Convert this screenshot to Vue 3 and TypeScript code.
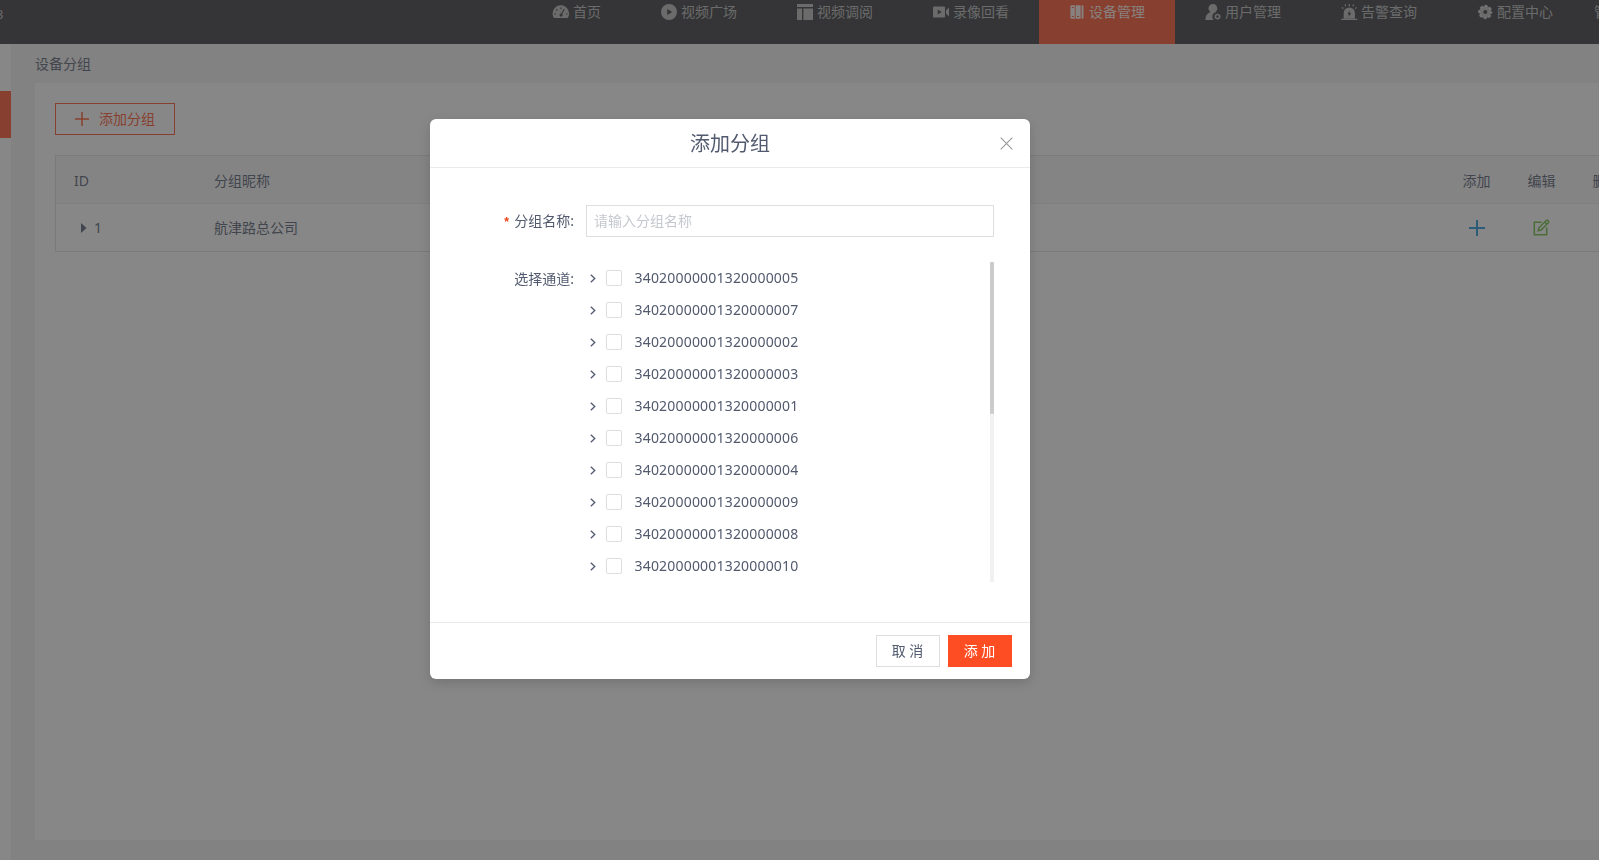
<script setup lang="ts">
import { ref } from 'vue'

interface NavItem {
  label: string
  icon: string
  active?: boolean
}

const navItems: NavItem[] = [
  { label: '首页', icon: 'dashboard' },
  { label: '视频广场', icon: 'play' },
  { label: '视频调阅', icon: 'layout' },
  { label: '录像回看', icon: 'camera' },
  { label: '设备管理', icon: 'device', active: true },
  { label: '用户管理', icon: 'user' },
  { label: '告警查询', icon: 'alarm' },
  { label: '配置中心', icon: 'gear' },
]

const channels: string[] = ['05', '07', '02', '03', '01', '06', '04', '09', '08', '10'].map(
  (n) => '340200000013200000' + n,
)

const groupName = ref('')
const checked = ref<string[]>([])
</script>

<template>
  <div class="page">
    <header class="header">
      <span class="brand">3</span>
      <nav class="nav">
        <a v-for="item in navItems" :key="item.label" class="nav-item" :class="{ active: item.active }">
          <svg class="nav-icon" viewBox="0 0 16 16" width="16" height="16" fill="currentColor">
            <path
              v-if="item.icon === 'dashboard'"
              fill-rule="evenodd"
              d="M1 14A8 8 0 0 1-.5 9.600a8.300 8.300 0 0 1 16.600 0c0 1.700-.5 3.200-1.500 4.400zM7.300 3.600v1.500h1.200V3.600zM3.600 5.100l-.8.8 1.100 1 .8-.8zM1.500 9.400v1.200H3V9.400zm11.500 0v1.200h1.500V9.400zM10.800 4.800L8.200 9.600a1.500 1.500 0 1 0 1 .5L11.700 5.200z"
            />
            <path
              v-else-if="item.icon === 'play'"
              fill-rule="evenodd"
              d="M8 0a8 8 0 1 1 0 16A8 8 0 0 1 8 0zM6.200 4.900v6.200L11.300 8z"
            />
            <path
              v-else-if="item.icon === 'layout'"
              d="M0 0h16v3H0zM0 4.600h5V16H0zM6.400 4.600H16V16H6.400z"
            />
            <path
              v-else-if="item.icon === 'camera'"
              fill-rule="evenodd"
              d="M1.200 2.400h9.600A1.200 1.200 0 0 1 12 3.600v8.800a1.200 1.200 0 0 1-1.200 1.200H1.200A1.200 1.200 0 0 1 0 12.400V3.600a1.200 1.200 0 0 1 1.200-1.200zM4.700 5.500v5L8.700 8zM13 6.500l3-3.100v9.200l-3-3.100z"
            />
            <path
              v-else-if="item.icon === 'device'"
              fill-rule="evenodd"
              d="M2.200 1.200h3.600v13.600H2.200l-.8-.8V2zM6.600 1.200h5v13.600h-5zM12.600 1.200h1.200l.7.8v12l-.7.800h-1.200zM2.800 3v1h2V3zM2.800 12v1h2v-1zM8.100 12v1h2v-1z"
            />
            <path
              v-else-if="item.icon === 'user'"
              fill-rule="evenodd"
              d="M8 0a4.300 4.300 0 0 1 2.600 7.700l.3.600A4.400 4.400 0 0 0 8.800 16H.4c0-4 1.500-6.600 5.100-8.100A4.300 4.300 0 0 1 8 0zM12.500 9.500l2.900 1.500v3.200l-2.900 1.600-2.800-1.600V11zM12.500 11.300a1.300 1.300 0 1 0 0 2.600 1.300 1.300 0 0 0 0-2.600z"
            />
            <path
              v-else-if="item.icon === 'alarm'"
              fill-rule="evenodd"
              d="M.3 14.800h16V16H.3zM2.700 15V9a5.600 5.600 0 0 1 11.200 0v6zM9 6.500L6.300 10.200h1.600L7.500 13l2.700-3.900H8.600zM7.700 0h1.200v2.200H7.700zM3.300.8L4.400.2l1 1.700-1.100.7zM13.300.8L12.200.2l-1 1.700 1.100.7zM.5 4l.6-1.100 1.600 1-.6 1.100zM16 4l-.6-1.100-1.600 1 .6 1.100z"
            />
            <g v-else fill="none" stroke="currentColor">
              <circle cx="8.300" cy="8" r="4" stroke-width="4" />
              <circle cx="8.300" cy="8" r="6.200" stroke-width="1.900" stroke-dasharray="3.070 1.800" stroke-dashoffset="1.535" />
            </g>
          </svg>
          <span>{{ item.label }}</span>
        </a>
        <a class="nav-more">管理员</a>
      </nav>
    </header>

    <div class="body">
      <aside class="sider"><div class="sider-active"></div></aside>
      <main class="content">
        <div class="crumb">设备分组</div>
        <section class="card">
          <button class="btn-outline">
            <svg width="14" height="14" viewBox="0 0 14 14" stroke="currentColor" stroke-width="1.500">
              <path d="M7 0v14M0 7h14" />
            </svg>
            <span>添加分组</span>
          </button>
          <div class="table">
            <div class="tr th">
              <div class="c-id">ID</div>
              <div class="c-name">分组昵称</div>
              <div class="c-op">添加</div>
              <div class="c-op">编辑</div>
              <div class="c-op">删除</div>
            </div>
            <div class="tr">
              <div class="c-id expand">
                <svg width="6" height="10" viewBox="0 0 6 10" fill="currentColor"><path d="M0 0l5.500 5L0 10z" /></svg>
                <span>1</span>
              </div>
              <div class="c-name">航津路总公司</div>
              <div class="c-op">
                <svg class="add" width="16" height="16" viewBox="0 0 16 16" stroke-width="2">
                  <path d="M8 0v16M0 8h16" />
                </svg>
              </div>
              <div class="c-op">
                <svg class="edit" width="17" height="17" viewBox="0 0 17 17" fill="none" stroke-width="1.500">
                  <path d="M8.600 3.300H1.300v12.400h12.400V8.500" />
                  <path d="M5.200 11.800l.7-3L13.200 1.500q.8-.7 1.600 0l.6.6q.8.8 0 1.600L8.100 11zM11.800 3l2.200 2.200" />
                </svg>
              </div>
              <div class="c-op">
                <svg class="trash" width="16" height="16" viewBox="0 0 16 16" fill="none" stroke-width="1.500">
                  <path d="M0 3h16M5 3V1h6v2M2.500 3v12h11V3M6 6v6M10 6v6" />
                </svg>
              </div>
            </div>
          </div>
        </section>
      </main>
    </div>

    <div class="mask">
      <div class="modal" role="dialog">
        <div class="modal-header">
          <span class="modal-title">添加分组</span>
          <svg class="close" width="13" height="13" viewBox="0 0 13 13" stroke="#999" stroke-width="1.100">
            <path d="M.7.7l11.600 11.600M12.300.7L.7 12.300" />
          </svg>
        </div>
        <div class="modal-body">
          <div class="form-row">
            <label class="form-label"><i class="star">*</i>分组名称:</label>
            <input v-model="groupName" class="input" type="text" placeholder="请输入分组名称" />
          </div>
          <div class="form-row tree-row">
            <label class="form-label tree-label">选择通道:</label>
            <div class="tree">
              <div class="tree-list">
                <label v-for="c in channels" :key="c" class="tree-node">
                  <svg width="6" height="9" viewBox="0 0 6 9" fill="none" stroke="currentColor" stroke-width="1.300">
                    <path d="M.8.700L4.800 4.500.8 8.300" />
                  </svg>
                  <input v-model="checked" type="checkbox" class="check" :value="c" />
                  <span class="num">{{ c }}</span>
                </label>
              </div>
              <div class="track"><div class="thumb"></div></div>
            </div>
          </div>
        </div>
        <div class="modal-footer">
          <button class="btn">取 消</button>
          <button class="btn primary">添 加</button>
        </div>
      </div>
    </div>
  </div>
</template>

<style>
body {
  margin: 0;
  overflow: hidden;
}
</style>

<style scoped>
.page {
  width: 100vw;
  height: 100vh;
  overflow: hidden;
  display: flex;
  flex-direction: column;
  background: #f3f3f3;
  color: #515a6e;
  font: 14px/1.5 'Noto Sans', 'Noto Sans CJK SC', sans-serif;
}
.page * {
  box-sizing: border-box;
}
.page svg {
  display: block;
  flex: none;
}
button,
input {
  font: inherit;
}
.header {
  flex: none;
  height: 44px;
  display: flex;
  background: #323438;
  color: rgba(255, 255, 255, 0.66);
  line-height: 24px;
  overflow: hidden;
}
.brand {
  width: 523px;
  flex: none;
  text-indent: -4px;
  line-height: 29px;
  font-size: 13px;
}
.nav {
  display: flex;
  white-space: nowrap;
}
.nav-item {
  flex: none;
  display: flex;
  gap: 4px;
  padding: 0 30px;
}
.nav-icon {
  margin-top: 4px;
  overflow: visible;
}
.nav-item.active {
  background: #ff4d23;
  color: rgba(255, 255, 255, 0.92);
}
.nav-more {
  margin-left: 11px;
}
.body {
  flex: 1;
  display: flex;
  min-height: 0;
}
.sider {
  flex: none;
  width: 11px;
  padding-top: 47px;
  background: #fff;
}
.sider-active {
  height: 47px;
  background: #ff4d23;
}
.content {
  flex: 1;
  min-width: 0;
  padding: 0 0 20px 24px;
  display: flex;
  flex-direction: column;
}
.crumb {
  height: 39px;
  line-height: 40px;
}
.card {
  flex: 1;
  background: #fff;
  padding: 20px 0 0 20px;
}
.btn-outline {
  width: 120px;
  height: 32px;
  padding: 0 0 0 19px;
  display: flex;
  align-items: center;
  gap: 10px;
  border: 1px solid #ff4d23;
  background: #fff;
  color: #ff4d23;
}
.btn-outline span {
  padding-bottom: 2px;
}
.table {
  margin-top: 20px;
  border: 1px solid #dcdee2;
  border-right: 0;
}
.tr {
  height: 47px;
  margin-right: -40px;
  display: flex;
  align-items: center;
  white-space: nowrap;
}
.th {
  height: 48px;
  padding-top: 2px;
  background: #f8f8f9;
  border-bottom: 1px solid #e8eaec;
}
.c-id {
  width: 140px;
  padding-left: 18px;
}
.expand {
  display: flex;
  align-items: center;
  gap: 7px;
  padding-left: 25px;
}
.c-name {
  flex: 1;
  padding-left: 18px;
}
.c-op {
  flex: none;
  width: 65px;
  display: flex;
  justify-content: center;
}
.add {
  stroke: #1f95dc;
}
.edit {
  stroke: #67bf3a;
}
.trash {
  stroke: #ff9900;
}
.mask {
  position: fixed;
  inset: 0;
  display: flex;
  justify-content: center;
  align-items: flex-start;
  padding: 119px 139px 0 0;
  background: rgba(55, 55, 55, 0.6);
}
.modal {
  width: 600px;
  height: 560px;
  display: flex;
  flex-direction: column;
  background: #fff;
  border-radius: 6px;
  box-shadow: 0 4px 12px rgba(0, 0, 0, 0.15);
}
.modal-header {
  flex: none;
  height: 49px;
  display: grid;
  grid-template-columns: 1fr auto 1fr;
  align-items: center;
  border-bottom: 1px solid #e8eaec;
}
.modal-title {
  grid-column: 2;
  font-size: 20px;
  line-height: 46px;
  padding-top: 2px;
}
.close {
  justify-self: end;
  margin-right: 17px;
}
.modal-body {
  flex: 1;
  padding: 37px 36px 0 0;
}
.form-row {
  display: flex;
}
.form-label {
  flex: none;
  width: 156px;
  padding-right: 12px;
  text-align: right;
  line-height: 32px;
}
.star {
  margin-right: 4px;
  color: #ed4014;
  font: bold 12px/1 'Liberation Mono', monospace;
}
.input {
  flex: 1;
  min-width: 0;
  height: 32px;
  padding: 0 7px 2px;
  border: 1px solid #dcdee2;
  border-radius: 0;
  outline: none;
  color: #515a6e;
}
.input::placeholder {
  color: #c5c8ce;
}
.tree-row {
  margin-top: 25px;
}
.tree-label {
  line-height: 34px;
}
.tree {
  flex: 1;
  height: 320px;
  display: flex;
  justify-content: space-between;
}
.tree-list {
  padding-left: 4px;
}
.tree-node {
  height: 32px;
  display: flex;
  align-items: center;
}
.tree-node svg {
  margin: 1px 10px 0 0;
}
.check {
  appearance: none;
  width: 16px;
  height: 16px;
  margin: 0 12.5px 0 0;
  border: 1px solid #dcdee2;
  border-radius: 2px;
  background: #fff;
}
.num {
  letter-spacing: 0.19px;
  line-height: 30px;
}
.track {
  width: 4px;
  background: #f1f1f1;
}
.thumb {
  height: 152px;
  border-radius: 1px;
  background: #ccc;
}
.modal-footer {
  flex: none;
  height: 57px;
  display: flex;
  justify-content: flex-end;
  gap: 8px;
  padding: 12px 18px 0 0;
  border-top: 1px solid #e8eaec;
}
.btn {
  width: 64px;
  height: 32px;
  padding: 0 1px 2px 0;
  border: 1px solid #dcdee2;
  background: #fff;
  color: #515a6e;
}
.btn.primary {
  border-color: #ff4d23;
  background: #ff4d23;
  color: #fff;
}
</style>
